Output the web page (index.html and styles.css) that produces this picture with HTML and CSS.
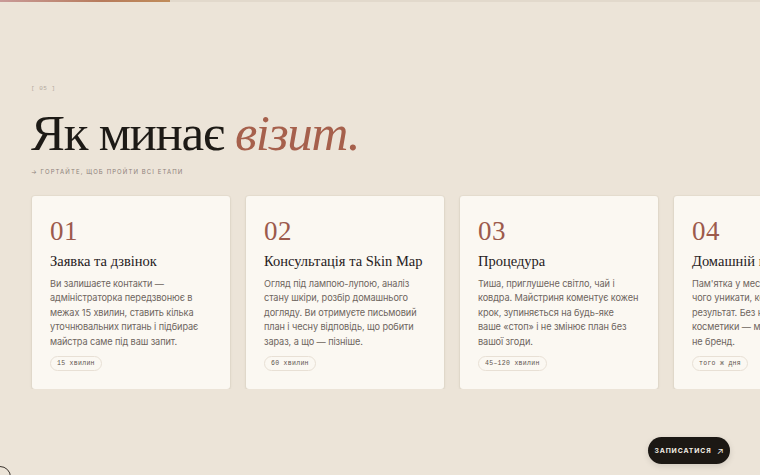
FILE: index.html
```html
<!DOCTYPE html>
<html lang="uk">
<head>
<meta charset="utf-8">
<title>Як минає візит</title>
<link rel="stylesheet" href="styles.css">
</head>
<body>
<div class="progress"><div class="progress-fill"></div></div>
<section class="visit">
  <div class="eyebrow">[ 05 ]</div>
  <h1 class="title">Як минає <em>візит.</em></h1>
  <p class="hint">→ гортайте, щоб пройти всі етапи</p>
  <div class="track">
    <article class="card">
      <div class="num">01</div>
      <h2 class="card-title">Заявка та дзвінок</h2>
      <p class="card-text">Ви залишаєте контакти —<br>адміністраторка передзвонює в<br>межах 15 хвилин, ставить кілька<br>уточнювальних питань і підбирає<br>майстра саме під ваш запит.</p>
      <span class="tag">15 хвилин</span>
    </article>
    <article class="card">
      <div class="num">02</div>
      <h2 class="card-title">Консультація та Skin Map</h2>
      <p class="card-text">Огляд під лампою-лупою, аналіз<br>стану шкіри, розбір домашнього<br>догляду. Ви отримуєте письмовий<br>план і чесну відповідь, що робити<br>зараз, а що — пізніше.</p>
      <span class="tag">60 хвилин</span>
    </article>
    <article class="card">
      <div class="num">03</div>
      <h2 class="card-title">Процедура</h2>
      <p class="card-text">Тиша, приглушене світло, чай і<br>ковдра. Майстриня коментує кожен<br>крок, зупиняється на будь-яке<br>ваше «стоп» і не змінює план без<br>вашої згоди.</p>
      <span class="tag">45–120 хвилин</span>
    </article>
    <article class="card card-last">
      <div class="num">04</div>
      <h2 class="card-title">Домашній протокол</h2>
      <p class="card-text">Пам'ятка у месенджері:<br>чого уникати, коли чекати<br>результат. Без нав'язування<br>косметики — ми продаємо догляд,<br>не бренд.</p>
      <span class="tag">того ж дня</span>
    </article>
  </div>
</section>
<a class="cta" href="#">Записатися <span class="cta-arrow">↗</span></a>
<div class="cursor"></div>
</body>
</html>
```

FILE: styles.css
```css
* { box-sizing: border-box; }
html, body { margin: 0; padding: 0; }
body {
  width: 760px;
  height: 475px;
  overflow: hidden;
  background: #ece4d8;
  font-family: "Inter", "Noto Sans", sans-serif;
  color: #2a231e;
  position: relative;
}
.progress {
  height: 2px;
  background: #e2d9cc;
}
.progress-fill {
  width: 170px;
  height: 2px;
  background: linear-gradient(90deg, #c99a98 0%, #b77b5c 60%, #c08c5a 100%);
}
.visit {
  padding: 83px 0 0 31px;
  overflow: hidden;
}
.eyebrow {
  font-family: "Liberation Mono", monospace;
  font-size: 6px;
  color: #b4aa9e;
  letter-spacing: 0.5px;
  height: 10px;
}
.title {
  margin: 12px 0 0 0;
  font-family: "Liberation Serif", serif;
  font-weight: 400;
  font-size: 51px;
  line-height: 52px;
  letter-spacing: -1.3px;
  color: #1d1a16;
}
.title em {
  font-style: italic;
  color: #a6604c;
}
.hint {
  margin: 9px 0 0 0;
  font-size: 6px;
  line-height: 7px;
  text-transform: uppercase;
  letter-spacing: 1.1px;
  color: #8c827a;
}
.track {
  display: flex;
  gap: 16px;
  margin-top: 21px;
  padding-left: 1px;
}
.card {
  flex: 0 0 198px;
  height: 193px;
  background: #fbf8f2;
  border-radius: 3px;
  box-shadow: 0 1px 3px rgba(90, 70, 50, 0.12), 0 0 0 1px rgba(120, 100, 80, 0.04);
  padding: 20px 18px 0 18px;
  overflow: hidden;
}
.num {
  font-family: "Liberation Serif", serif;
  font-size: 27px;
  line-height: 30px;
  color: #9c5a4c;
  letter-spacing: 0.5px;
}
.card-title {
  margin: 6px 0 0 0;
  font-family: "Liberation Serif", serif;
  font-weight: 400;
  font-size: 14.5px;
  line-height: 18px;
  color: #26201c;
  white-space: nowrap;
}
.card-text {
  margin: 7px 0 0 0;
  font-size: 9.2px;
  line-height: 14.4px;
  color: #6e655e;
  white-space: nowrap;
  letter-spacing: -0.1px;
}
.tag {
  display: inline-block;
  margin-top: 6px;
  padding: 0 6px;
  height: 15px;
  line-height: 14px;
  border: 1px solid #e8e0d5;
  border-radius: 8px;
  font-family: "Liberation Mono", monospace;
  font-size: 6.5px;
  color: #5d544d;
  letter-spacing: 0.3px;
}
.cta {
  position: absolute;
  left: 648px;
  top: 437px;
  width: 82px;
  height: 27px;
  border-radius: 14px;
  background: #1c1814;
  color: #f3ede4;
  text-decoration: none;
  font-size: 6.8px;
  font-weight: 700;
  letter-spacing: 0.9px;
  text-transform: uppercase;
  display: flex;
  align-items: center;
  justify-content: center;
  gap: 5px;
  box-shadow: 0 2px 6px rgba(0,0,0,0.12);
}
.cta-arrow {
  font-size: 9px;
  font-weight: 400;
  letter-spacing: 0;
}
.cursor {
  position: absolute;
  left: -11px;
  top: 466px;
  width: 22px;
  height: 22px;
  border: 1px solid #3a332d;
  border-radius: 50%;
}
.cursor::after {
  content: "";
  position: absolute;
  left: 8px;
  top: 8px;
  width: 4px;
  height: 4px;
  border-radius: 50%;
  background: #1c1814;
}
```
